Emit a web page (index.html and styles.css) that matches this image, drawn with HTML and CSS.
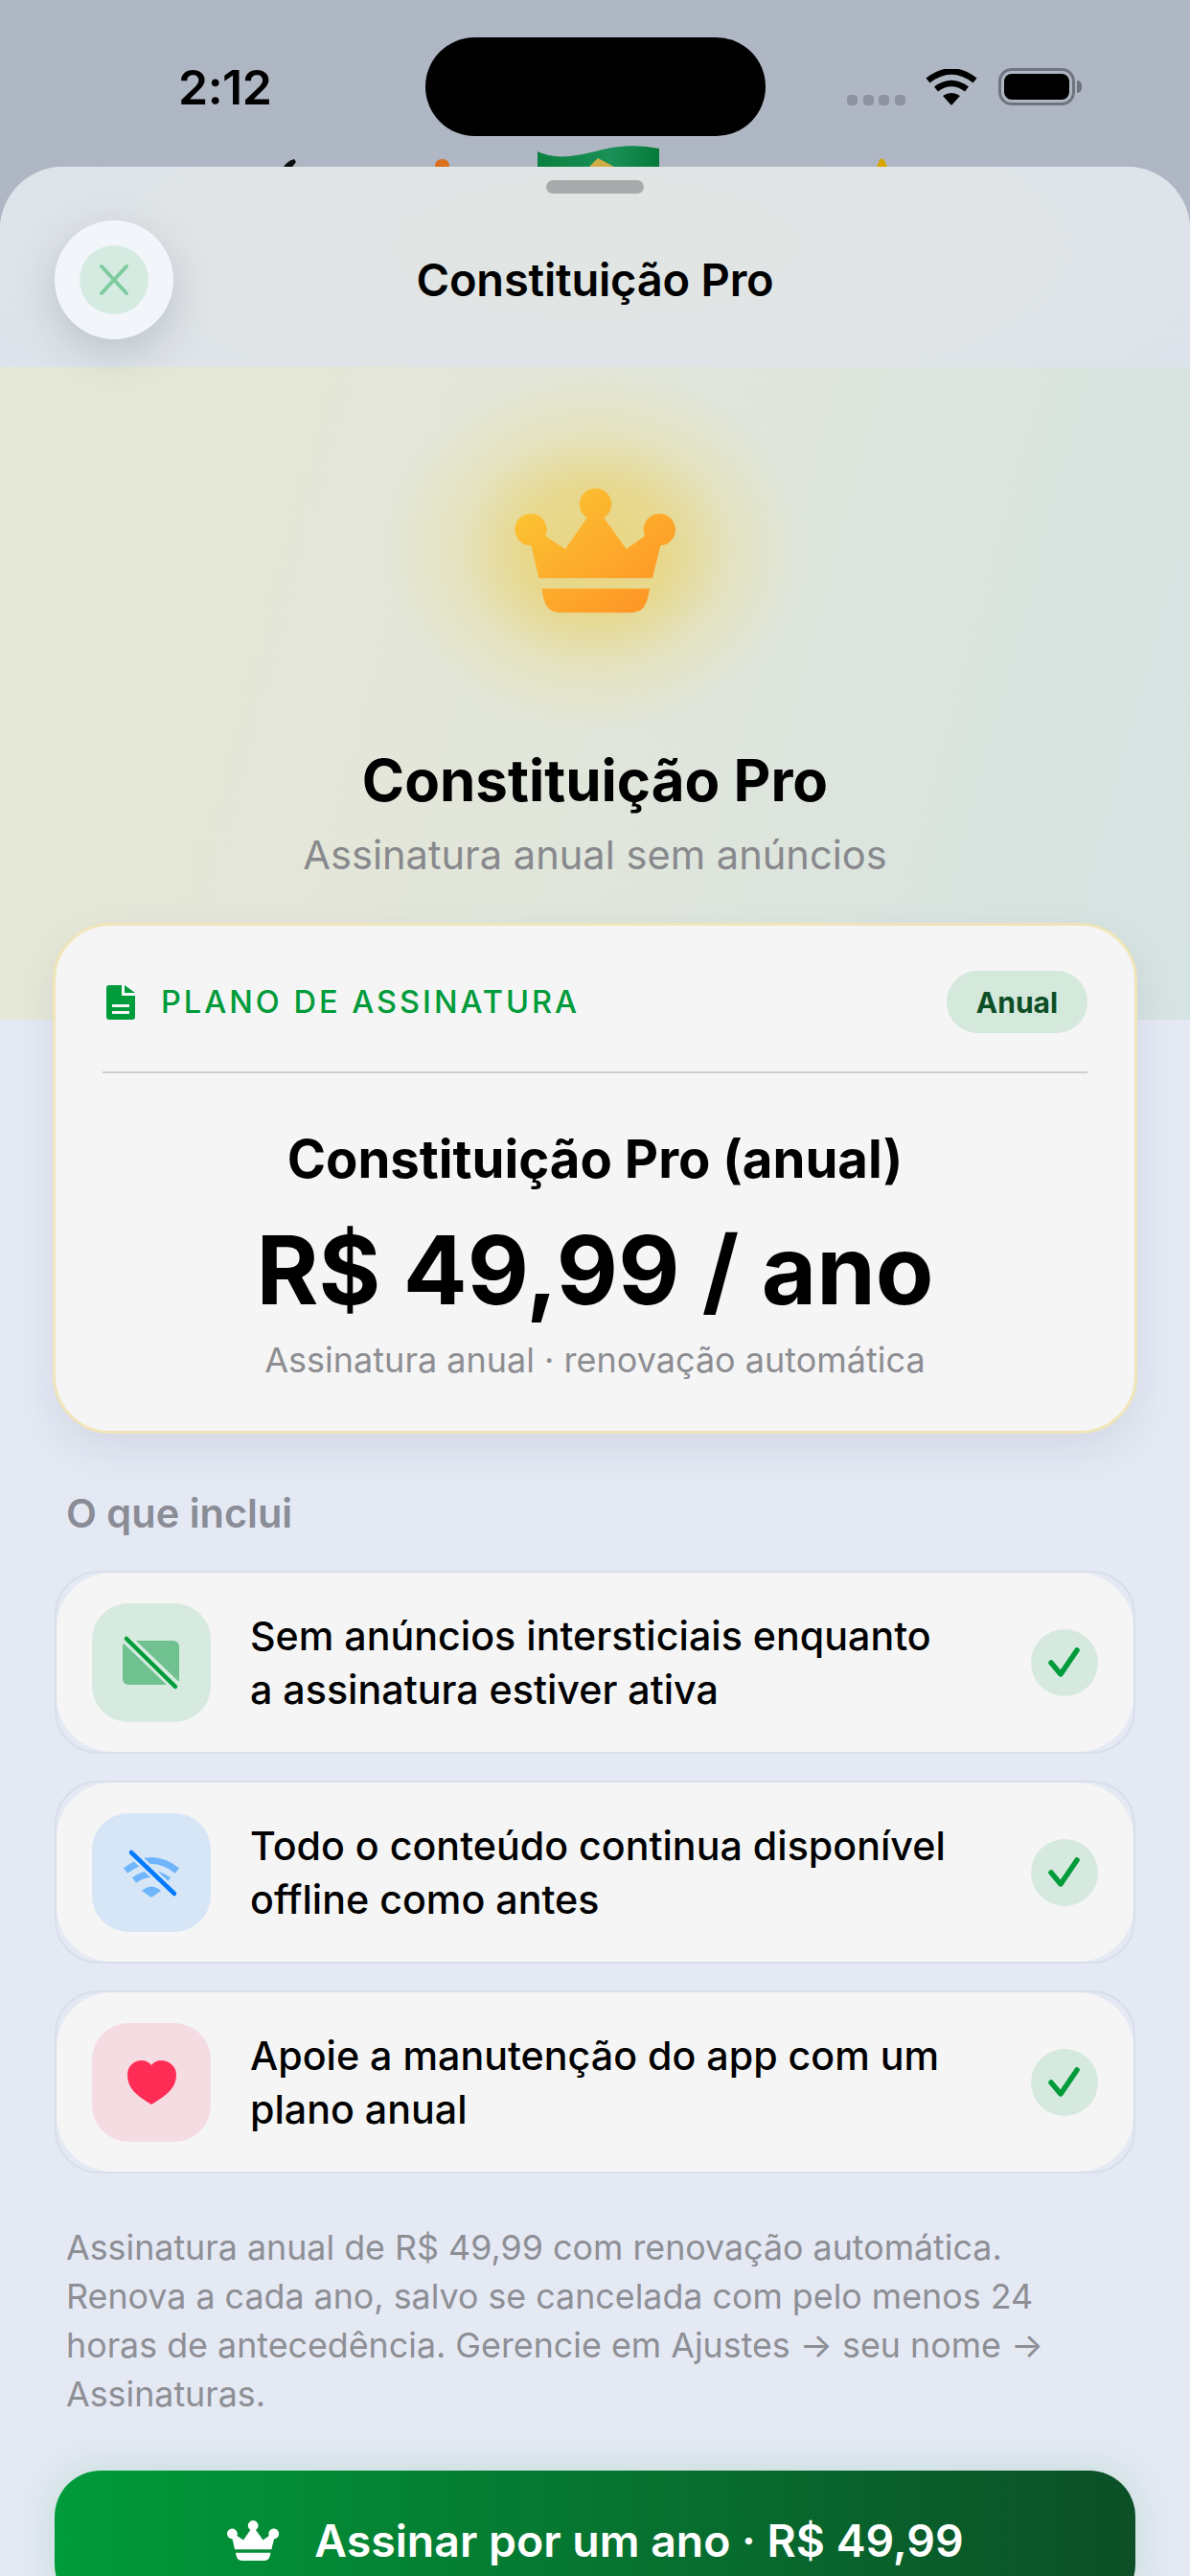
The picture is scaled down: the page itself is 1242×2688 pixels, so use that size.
FILE: index.html
```html
<!DOCTYPE html>
<html lang="pt-BR">
<head>
<meta charset="utf-8">
<title>Constituição Pro</title>
<link rel="stylesheet" href="styles.css">
</head>
<body>
<div class="screen">
  <header class="statusbar">
    <svg class="peek" width="1242" height="174" viewBox="0 0 1242 174">
      <defs>
        <linearGradient id="flag-grad" x1="0" y1="0" x2="1" y2="0">
          <stop offset="0" stop-color="#0a8040"/>
          <stop offset="0.6" stop-color="#1a9058"/>
          <stop offset="1" stop-color="#067a3a"/>
        </linearGradient>
      </defs>
      <path d="M296 174q4-6 11-8l2 3q-2 3-4 5z" fill="#0c0c0c"/>
      <path d="M454 174q0-8 7.500-8t7.500 8z" fill="#d8701c"/>
      <path d="M915 174l3-7q2-3 5 0l3 7z" fill="#d9a400"/>
      <path d="M561 158q14 7 34 5 16-2 34-7 30-7 59-1v19H561z" fill="url(#flag-grad)"/>
      <path d="M624 165l17 9h-26z" fill="#cfac44"/>
    </svg>
    <span class="time">2:12</span>
    <div class="island"></div>
    <div class="status-icons">
      <div class="signal"><i></i><i></i><i></i><i></i></div>
      <svg class="wifi" width="54" height="38" viewBox="0 0 54 38">
        <path d="M27 38l-9-10q9-6 18 0z" fill="#000"/>
        <path d="M11 21q16-12 32 0" fill="none" stroke="#000" stroke-width="6.500"/>
        <path d="M2.500 12q24.500-19 49 0" fill="none" stroke="#000" stroke-width="6.500"/>
      </svg>
      <div class="battery"><div class="battery-fill"></div></div>
    </div>
  </header>

  <main class="sheet">
    <div class="navbar">
      <div class="grabber"></div>
      <div class="nav-row">
        <button class="close" type="button">
          <span class="close-inner">
            <svg width="36" height="36" viewBox="0 0 36 36"><path d="M5 4l26 28M31 4L5 32" fill="none" stroke="#7fcb9f" stroke-width="4" stroke-linecap="round"/></svg>
          </span>
        </button>
        <h1 class="nav-title">Constituição Pro</h1>
      </div>
    </div>

    <section class="hero">
      <div class="glow">
        <svg class="crown" width="174" height="135" viewBox="340 260 520 405">
          <defs>
            <linearGradient id="crown-grad" x1="0" y1="0" x2="1" y2="1">
              <stop offset="0" stop-color="#fbc934"/>
              <stop offset="1" stop-color="#ff8f24"/>
            </linearGradient>
          </defs>
          <path fill="url(#crown-grad)" d="M398 347a50 50 0 0 1 47 70l62 41 68-98a50 50 0 1 1 53 0l70 98 58-41a50 50 0 1 1 49 30l-25 102H424l-24-102a50 50 0 0 1-2-100zM433 582h338c-8 50-18 75-62 75H495c-44 0-54-25-62-75z"/>
        </svg>
      </div>
      <h2 class="hero-title">Constituição Pro</h2>
      <p class="hero-sub">Assinatura anual sem anúncios</p>
    </section>

    <div class="content">
      <section class="plan">
        <div class="plan-head">
          <svg class="doc" width="30" height="36" viewBox="0 0 30 36">
            <path d="M3 0h13v11h14v22a3 3 0 0 1-3 3H3a3 3 0 0 1-3-3V3a3 3 0 0 1 3-3zM6 20v3h18v-3zM6 27v3h18v-3z" fill="#009b3a" fill-rule="evenodd"/>
            <path d="M19 0l11 8H19z" fill="#009b3a"/>
          </svg>
          <span class="plan-label">PLANO DE ASSINATURA</span>
          <span class="badge">Anual</span>
        </div>
        <div class="plan-body">
          <h3 class="plan-name">Constituição Pro (anual)</h3>
          <p class="price">R$ 49,99 / ano</p>
          <p class="plan-note">Assinatura anual · renovação automática</p>
        </div>
      </section>

      <h4 class="section-label">O que inclui</h4>

      <ul class="features">
        <li class="feature">
          <span class="tile tile-green">
            <svg width="124" height="124" viewBox="0 0 124 124">
              <rect x="32" y="39" width="59" height="46" rx="6" fill="#6fc28f"/>
              <path d="M36 37l52 50" stroke="#d6eadf" stroke-width="11"/>
              <path d="M36 37l51 50" stroke="#009b3a" stroke-width="4.500" stroke-linecap="round"/>
            </svg>
          </span>
          <span class="feature-text">Sem anúncios intersticiais enquanto<br>a assinatura estiver ativa</span>
          <span class="check">
            <svg width="70" height="70" viewBox="0 0 70 70"><path d="M21 35l10 12 17-25" fill="none" stroke="#009b3a" stroke-width="5.500" stroke-linecap="round" stroke-linejoin="round"/></svg>
          </span>
        </li>
        <li class="feature">
          <span class="tile tile-blue">
            <svg width="124" height="124" viewBox="0 0 124 124">
              <path d="M62 88l-10-7q10-9 20 0z" fill="#6fb5fb"/>
              <path d="M44 70q18-13 36 0" fill="none" stroke="#6fb5fb" stroke-width="7"/>
              <path d="M35 60q27-21 54 0" fill="none" stroke="#6fb5fb" stroke-width="7"/>
              <path d="M41 41l45 43" stroke="#d6e6f7" stroke-width="10"/>
              <path d="M41 41l45 43" stroke="#007aff" stroke-width="4.500" stroke-linecap="round"/>
            </svg>
          </span>
          <span class="feature-text">Todo o conteúdo continua disponível<br>offline como antes</span>
          <span class="check">
            <svg width="70" height="70" viewBox="0 0 70 70"><path d="M21 35l10 12 17-25" fill="none" stroke="#009b3a" stroke-width="5.500" stroke-linecap="round" stroke-linejoin="round"/></svg>
          </span>
        </li>
        <li class="feature">
          <span class="tile tile-red">
            <svg width="124" height="124" viewBox="0 0 124 124">
              <path d="M62 85C45 75 37 67 37 54c0-9 7-15 15-15 4 0 8 2 10 5 2-3 6-5 10-5 8 0 16 6 16 15 0 13-9 21-26 31z" fill="#ff2d55"/>
            </svg>
          </span>
          <span class="feature-text">Apoie a manutenção do app com um<br>plano anual</span>
          <span class="check">
            <svg width="70" height="70" viewBox="0 0 70 70"><path d="M21 35l10 12 17-25" fill="none" stroke="#009b3a" stroke-width="5.500" stroke-linecap="round" stroke-linejoin="round"/></svg>
          </span>
        </li>
      </ul>

      <p class="legal">Assinatura anual de R$ 49,99 com renovação automática.<br>Renova a cada ano, salvo se cancelada com pelo menos 24<br>horas de antecedência. Gerencie em Ajustes → seu nome →<br>Assinaturas.</p>

      <button class="cta" type="button">
        <svg width="56" height="44" viewBox="340 260 520 405">
          <path fill="#fff" d="M398 347a50 50 0 0 1 47 70l62 41 68-98a50 50 0 1 1 53 0l70 98 58-41a50 50 0 1 1 49 30l-25 102H424l-24-102a50 50 0 0 1-2-100zM433 582h338c-8 50-18 75-62 75H495c-44 0-54-25-62-75z"/>
        </svg>
        <span>Assinar por um ano · R$ 49,99</span>
      </button>
    </div>
  </main>
</div>
</body>
</html>
```
FILE: styles.css
```css
* { box-sizing: border-box; }
html, body { margin: 0; padding: 0; }
body { font-family: Inter, "Liberation Sans", sans-serif; color: #000; }
h1, h2, h3, h4, p, ul { margin: 0; padding: 0; }
ul { list-style: none; }
button { font: inherit; border: 0; padding: 0; }

.screen {
  width: 1242px;
  height: 2688px;
  overflow: hidden;
  background: #b0b7c4;
}

.statusbar {
  position: relative;
  height: 174px;
  display: flex;
  padding: 39px 120px 0 186px;
  justify-content: space-between;
}
.peek { position: absolute; left: 0; top: 0; }
.time {
  position: relative;
  font-size: 50px;
  font-weight: 600;
  line-height: 54px;
  margin-top: 25px;
  letter-spacing: -0.5px;
}
.island {
  position: absolute;
  left: 444px;
  top: 39px;
  width: 355px;
  height: 103px;
  border-radius: 52px;
  background: #000;
}
.status-icons {
  position: relative;
  display: flex;
  align-items: center;
  gap: 21px;
  height: 39px;
  margin-top: 32px;
}
.signal { display: flex; gap: 5.7px; align-items: center; margin-top: 28px; }
.signal i {
  width: 11px;
  height: 11px;
  border-radius: 4px;
  background: #8e949f;
}
.battery {
  position: relative;
  width: 80px;
  height: 39px;
  margin-left: 1px;
  border: 3px solid #6f747e;
  border-radius: 14px;
  padding: 3px;
}
.battery::after {
  content: "";
  position: absolute;
  left: 79px;
  top: 10px;
  width: 5px;
  height: 13px;
  background: #6f747e;
  border-radius: 0 5px 5px 0;
}
.battery-fill {
  height: 100%;
  border-radius: 8px;
  background: #000;
}

.sheet {
  position: relative;
  height: 2514px;
  border-radius: 66px 66px 0 0;
  overflow: hidden;
  background: #e4e9f4;
}

.navbar {
  height: 209px;
  padding-top: 14px;
  background: radial-gradient(ellipse 760px 260px at 50% 40%, #e1e5e2 0%, #dfe4e8 65%, #dde3ec 100%);
}
.grabber {
  width: 102px;
  height: 14px;
  margin: 0 auto;
  border-radius: 7px;
  background: #a7abab;
}
.nav-row {
  position: relative;
  display: flex;
  justify-content: center;
  height: 124px;
  margin-top: 28px;
  align-items: center;
}
.close {
  position: absolute;
  left: 57px;
  top: 0;
  width: 124px;
  height: 124px;
  border-radius: 50%;
  background: #f2f6fb;
  box-shadow: 0 14px 44px rgba(70, 80, 95, 0.22);
  display: flex;
  align-items: center;
  justify-content: center;
}
.close-inner {
  width: 72px;
  height: 72px;
  border-radius: 50%;
  background: #d5ebe1;
  display: flex;
  align-items: center;
  justify-content: center;
}
.nav-title {
  font-size: 47px;
  font-weight: 600;
  line-height: 56px;
  letter-spacing: -0.2px;
}

.hero {
  height: 681px;
  display: flex;
  flex-direction: column;
  align-items: center;
  background: linear-gradient(105deg, #e7e8d6 0%, #e2e6da 45%, #d5e3e2 100%);
}
.glow {
  width: 440px;
  height: 382px;
  display: flex;
  flex: none;
  align-items: center;
  justify-content: center;
  background: radial-gradient(closest-side, rgba(232, 214, 128, 1) 0%, rgba(232, 215, 135, 0.9) 35%, rgba(232, 222, 160, 0.45) 65%, rgba(232, 228, 190, 0) 100%);
}
.crown { display: block; }
.hero-title {
  font-size: 60px;
  font-weight: 700;
  line-height: 72px;
  margin-top: 13px;
}
.hero-sub {
  font-size: 41.6px;
  line-height: 48px;
  color: #88898d;
  margin-top: 18px;
}

.content {
  padding: 0 57px;
  margin-top: -101px;
  position: relative;
}
.plan {
  height: 533px;
  margin: 0 -2px;
  padding: 47px 49px 0;
  border-radius: 60px;
  border: 3px solid #f0e5ba;
  background: #f5f5f5;
  box-shadow: 0 16px 40px rgba(90, 100, 120, 0.12);
}
.plan-head {
  display: flex;
  align-items: center;
  height: 65px;
}
.doc { margin-left: 4px; flex: none; }
.plan-label {
  margin-left: 27px;
  font-size: 32.5px;
  font-weight: 500;
  letter-spacing: 3px;
  color: #009b3a;
  flex: 1;
}
.badge {
  width: 147px;
  height: 65px;
  border-radius: 33px;
  background: #d4e8dc;
  color: #0c4f27;
  font-size: 30px;
  font-weight: 700;
  display: flex;
  align-items: center;
  justify-content: center;
}
.plan-body {
  margin-top: 40px;
  border-top: 2px solid #cdcdcd;
  text-align: center;
}
.plan-name {
  font-size: 54.5px;
  font-weight: 700;
  line-height: 64px;
  margin-top: 57px;
}
.price {
  font-size: 99px;
  font-weight: 700;
  line-height: 124px;
  margin-top: 22px;
}
.plan-note {
  font-size: 36px;
  line-height: 44px;
  color: #8d8d92;
  margin-top: 10px;
}

.section-label {
  font-size: 41.5px;
  font-weight: 600;
  line-height: 50px;
  color: #8a8c96;
  margin: 58px 0 0 12px;
}

.features {
  display: flex;
  flex-direction: column;
  gap: 28px;
  margin-top: 35px;
}
.feature {
  position: relative;
  isolation: isolate;
  height: 191px;
  display: flex;
  align-items: center;
  padding: 0 37px 0 37px;
  border-radius: 46px;
  border: 2px solid #d9dfea;
  background: #e4e9f4;
}
.feature::before {
  content: "";
  position: absolute;
  inset: 0;
  z-index: -1;
  border-radius: 58px;
  background: #f5f5f5;
}
.tile {
  width: 124px;
  height: 124px;
  flex: none;
  border-radius: 38px;
  display: block;
}
.tile svg { display: block; }
.tile-green { background: #d6eadf; }
.tile-blue { background: #d6e6f7; }
.tile-red { background: #f5dce2; }
.feature-text {
  flex: 1;
  margin-left: 41px;
  font-size: 41.2px;
  font-weight: 500;
  line-height: 56px;
}
.check {
  width: 70px;
  height: 70px;
  flex: none;
  border-radius: 50%;
  background: #d6e9df;
}
.check svg { display: block; }

.legal {
  font-size: 35.8px;
  line-height: 51px;
  color: #8e8f95;
  margin: 52px 0 0 12px;
  white-space: nowrap;
}

.cta {
  width: 100%;
  height: 146px;
  margin-top: 54px;
  border-radius: 48px;
  color: #fff;
  font-size: 46.4px;
  font-weight: 600;
  background: linear-gradient(90deg, #009b3a 0%, #0c4f27 100%);
  box-shadow: 0 0 40px rgba(0, 155, 58, 0.16);
  display: flex;
  align-items: center;
  justify-content: center;
  gap: 36px;
}
```
